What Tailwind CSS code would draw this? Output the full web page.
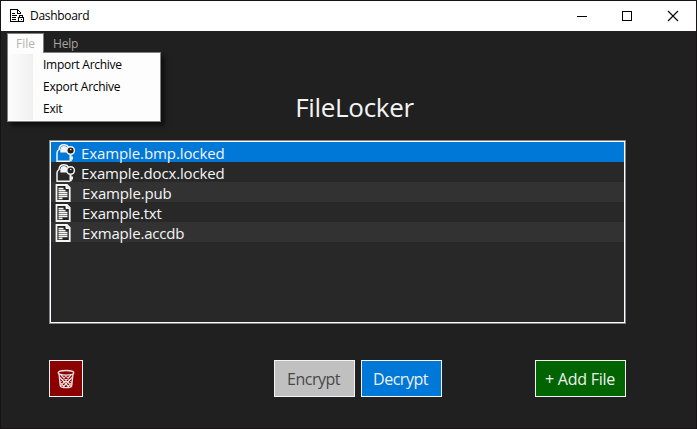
<!DOCTYPE html>
<html lang="en">
<head>
<meta charset="utf-8">
<title>Dashboard</title>
<script src="https://cdn.jsdelivr.net/npm/@tailwindcss/browser@4"></script>
</head>
<body class="w-[697px] h-[429px] overflow-hidden bg-[#202020] font-['Open_Sans','Noto_Sans',sans-serif]">
<svg class="hidden">
  <symbol id="doc" viewBox="0 0 16 18">
    <path d="M1.500 1h10.500L14.700 3.700V17H1.500z" fill="#202020" stroke="#f4f4f4" stroke-width="1.800"/>
    <path d="M11 1v3.500h3.500" fill="#f4f4f4" stroke="#f4f4f4"/>
    <path d="M3.500 4.500h5M3.500 6.500h7M3.500 8.500h9M3.500 10.500h9M3.500 12.500h9M3.500 14.500h4" stroke="#f4f4f4" stroke-width="1.400"/>
  </symbol>
  <symbol id="lock" viewBox="0 0 20 18">
    <path d="M4.300 8.500V5.500C4.300 3 6 2 8 2s3.500 1 3.500 3.500v3z" fill="#f4f4f4"/>
    <path d="M12.300 3C11.500 1.300 10 .8 8 .8 5 .8 3.300 2.500 3 5.500C1.500 6.500 1 7.500 1 9V17.200h13" fill="none" stroke="#f4f4f4" stroke-width="1.500"/>
    <circle cx="14.600" cy="6.500" r="3.800" fill="#202020" stroke="#f4f4f4" stroke-width="1.500"/>
    <path d="M14.500 10.500V16l1 1M16 12.500v3" stroke="#f4f4f4" stroke-width="2" fill="none"/>
    <circle cx="14.800" cy="5.500" r=".8" fill="#f4f4f4"/>
  </symbol>
</svg>
<div class="relative flex flex-col w-full h-full border border-[#171314]">
  <header class="h-[30px] shrink-0 bg-white flex items-center pl-[9px]">
    <svg class="w-[15px] h-[15px] mt-px" viewBox="0 0 15 15" fill="none" stroke="#000" shape-rendering="crispEdges">
      <path d="M8 12.500H.5V.5h7l3 3V5M7.500 1v3.500H10M2 4.500h3M2 6.500h5M2 8.500h4M2 10.500h4"/>
      <path d="M8.500 8.500h5v4h-5zM9.500 8V6.500h3V8M11 10v1"/>
    </svg>
    <span class="ml-[5px] text-[12px] tracking-[-0.3px] text-black leading-[16px]">Dashboard</span>
    <svg class="ml-auto mr-[17px] w-[102px] h-[12px]" viewBox="0 0 102 12" fill="none" stroke="#000">
      <path d="M0 6.500h10M45.500 1.500h9v9h-9z" shape-rendering="crispEdges"/>
      <path d="M91 1l10 10M101 1L91 11" stroke-width="1.100"/>
    </svg>
  </header>
  <nav class="flex h-[22px] shrink-0 pl-[6px] pt-[2px] text-[12px] leading-[20px] relative">
    <div class="w-[37px] h-[20px] bg-[#fdfdfd] border border-b-0 border-[#808080] text-[#b4b4b0] pl-[8px] relative z-10">File</div>
    <div class="pl-[9px] pt-px text-[#a6a6a0] tracking-[-0.2px]">Help</div>
    <div class="absolute left-[6px] top-[21px] w-[154px] h-[70px] border border-[#808080] bg-[#fdfdfd] shadow-[4px_4px_4px_rgba(0,0,0,0.5)] flex">
      <div class="w-[24px] my-px ml-px shrink-0 bg-linear-to-r from-[#fcfcfc] to-[#f0f0f0]"></div>
      <div class="pl-[10px] pt-px text-black leading-[22px] tracking-[-0.28px] whitespace-nowrap">
        <div>Import Archive</div><div>Export Archive</div><div>Exit</div>
      </div>
    </div>
  </nav>
  <main class="px-[48px] flex flex-col">
    <h1 class="mt-[36px] h-[36px] leading-[36px] pl-[12px] text-center text-[26px] tracking-[-0.3px] text-[#f4f4f4]">FileLocker</h1>
    <div class="mt-[15px] w-[577px] h-[184px] border border-[#84848c] bg-[#282828]">
      <div class="h-full border border-white text-[15px] text-[#f4f4f4] leading-[23px]">
        <div class="h-[20px] bg-[#0078d7] flex pl-[5px]"><svg class="w-[20px] h-[18px] mt-[2px]"><use href="#lock"/></svg><span class="ml-[5px] tracking-[-0.1px]">Example.bmp.locked</span></div>
        <div class="h-[20px] flex pl-[5px]"><svg class="w-[20px] h-[18px] mt-[2px]"><use href="#lock"/></svg><span class="ml-[5px] tracking-[-0.15px]">Example.docx.locked</span></div>
        <div class="h-[20px] bg-[#323232] flex pl-[4px]"><svg class="w-[16px] h-[18px] mt-[2px]"><use href="#doc"/></svg><span class="ml-[11px] tracking-[-0.15px]">Example.pub</span></div>
        <div class="h-[20px] flex pl-[4px]"><svg class="w-[16px] h-[18px] mt-[2px]"><use href="#doc"/></svg><span class="ml-[11px] tracking-[-0.25px]">Example.txt</span></div>
        <div class="h-[20px] bg-[#323232] flex pl-[4px]"><svg class="w-[16px] h-[18px] mt-[2px]"><use href="#doc"/></svg><span class="ml-[11px] tracking-[-0.2px]">Exmaple.accdb</span></div>
      </div>
    </div>
    <div class="mt-[36px] w-[577px] flex text-[16px] text-[#f0f0f0]">
      <button class="w-[34px] h-[37px] border border-[#f4f4f4] bg-[#8b0000] flex items-center justify-center">
        <svg class="w-[18px] h-[20px]" viewBox="0 0 18 20" fill="none" stroke="#eee0e0">
          <path d="M2 5l1.300 12c1 2.200 10.400 2.200 11.400 0L16 5" stroke-width="1.300"/>
          <ellipse cx="9" cy="3.800" rx="7.800" ry="2.300" stroke-width="1.400"/>
          <path d="M2.500 8l9.500 10M3.500 14l4 4M4 6l10.500 11M8.500 6.500l6.500 7M15.500 8L6 18M14.500 14l-4 4M14 6L3.500 17M9.500 6.500L3 13.500" stroke-width="1.100"/>
        </svg>
      </button>
      <button class="ml-[191px] w-[81px] h-[37px] border border-[#f4f4f4] bg-[#c0c0c0] text-[#484848] tracking-[-0.5px] pt-px pr-[2px]">Encrypt</button>
      <button class="ml-[6px] w-[81px] h-[37px] border border-[#f4f4f4] bg-[#0078d7] tracking-[-0.5px] pt-px pr-[2px]">Decrypt</button>
      <button class="ml-auto w-[91px] h-[37px] border border-[#f4f4f4] bg-[#006400] tracking-[-0.25px] whitespace-nowrap pt-px pr-px">+ Add File</button>
    </div>
  </main>
</div>
</body>
</html>
